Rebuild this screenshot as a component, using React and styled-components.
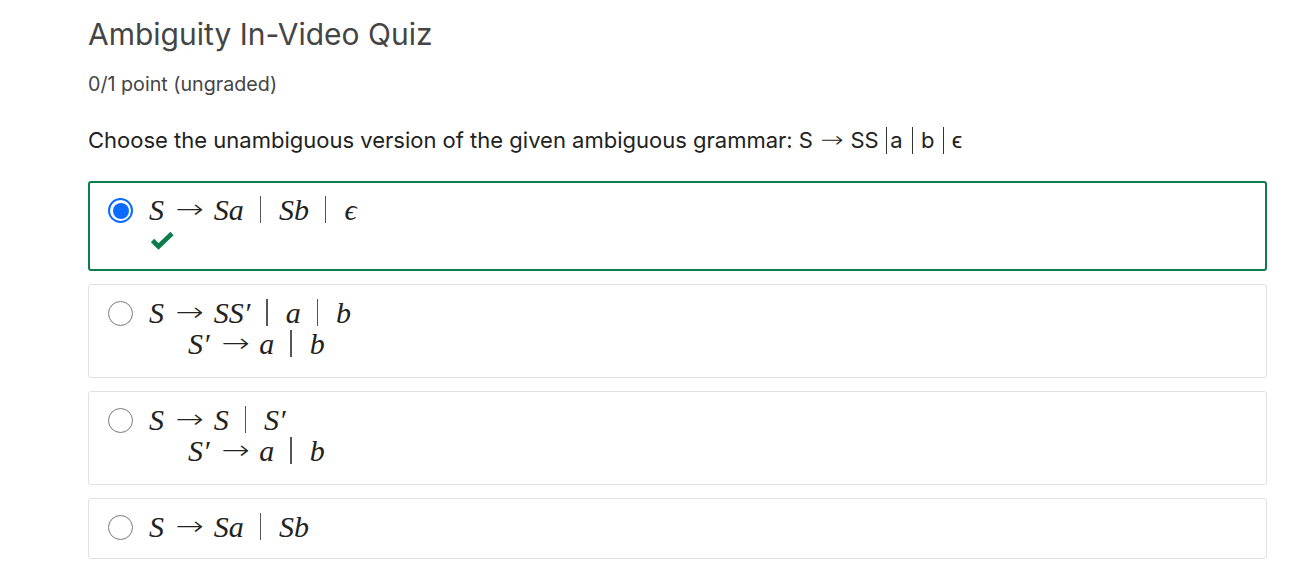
import React from "react"
import styled, { createGlobalStyle } from "styled-components"

const GlobalStyle = createGlobalStyle`
  body {
    margin: 0;
    background: #fff;
    font-family: Inter, "Noto Sans", sans-serif;
  }
`

const Page = styled.div`
  padding: 14px 39px 0 88px;
`

const Title = styled.h2`
  margin: 0;
  font-size: 30px;
  font-weight: 400;
  color: #454545;
  line-height: 40px;
`

const Points = styled.div`
  margin-top: 17px;
  font-size: 19.7px;
  line-height: 26px;
  color: #454545;
`

const Question = styled.p`
  margin: 28px 0 26px;
  font-size: 22px;
  line-height: 30px;
  color: #222;
  display: flex;
  align-items: center;
  white-space: pre;
`

const Bar = styled.span`
  display: inline-block;
  width: 1.5px;
  height: 27px;
  background: #333;
  margin: 0 ${(p) => p.$r || 6}px 0 ${(p) => p.$l || 6}px;
`

const SmallArrow = styled.span`
  font-family: "DejaVu Sans", sans-serif;
  font-weight: 200;
  display: inline-block;
  transform: scaleX(1.25);
  margin: 0 9px 0 10px;
`

const Options = styled.div`
  display: flex;
  flex-direction: column;
  gap: 13px;
`

const Option = styled.label`
  display: flex;
  align-items: flex-start;
  gap: 16px;
  border: ${(p) => (p.$correct ? "2px solid #0d7d4d" : "1px solid #e1e1e1")};
  border-radius: 3px;
  padding: ${(p) => (p.$correct ? "14px 18px 17px" : "15px 19px 17px")};
  height: ${(p) => p.$h}px;
  box-sizing: border-box;
`

const Radio = styled.span`
  flex: none;
  width: 25px;
  height: 25px;
  margin-top: 1px;
  border-radius: 50%;
  box-sizing: border-box;
  border: ${(p) => (p.$checked ? "2px solid #0a6cff" : "1.2px solid #7a7a7a")};
  display: flex;
  align-items: center;
  justify-content: center;
  &::after {
    content: "";
    display: ${(p) => (p.$checked ? "block" : "none")};
    width: 16px;
    height: 16px;
    border-radius: 50%;
    background: #0a6cff;
  }
`

const Math = styled.div`
  font-family: "Liberation Serif", "DejaVu Serif", serif;
  font-size: 30px;
  color: #222;
  line-height: 31px;
  margin-top: -3px;
  display: flex;
  flex-direction: column;
`

const Line = styled.div`
  display: flex;
  align-items: center;
  white-space: pre;
  padding-left: ${(p) => p.$indent || 0}px;
`

const V = styled.i``

const Arrow = styled.span`
  font-family: "DejaVu Sans", sans-serif;
  font-weight: 200;
  font-size: 26px;
  display: inline-block;
  transform: scaleX(1.3);
  margin: 0 13px 0 15px;
`

const Or = styled.span`
  display: inline-block;
  width: 1.3px;
  height: 27px;
  background: #555;
  margin: 0 18px 0 16px;
`

const Check = styled.svg`
  display: block;
  margin-top: 6px;
  margin-left: 1px;
`

const Answer = ({ checked, correct, h, children }) => (
  <Option $correct={correct} $h={h}>
    <Radio $checked={checked} />
    <Math>
      {children}
      {correct && (
        <Check width="24" height="19" viewBox="0 0 24 19">
          <path d="M2.5 9.5 L8.5 15.5 L22 2.5" fill="none" stroke="#0d7d4d" strokeWidth="4.6" />
        </Check>
      )}
    </Math>
  </Option>
)

const App = () => (
  <>
    <GlobalStyle />
    <Page>
      <Title>Ambiguity In-Video Quiz</Title>
      <Points>0/1 point (ungraded)</Points>
      <Question>
        Choose the unambiguous version of the given ambiguous grammar: S<SmallArrow>→</SmallArrow>SS<Bar $l={7} $r={3} />a<Bar $l={9} $r={8} />b<Bar $l={8} $r={8} />ϵ
      </Question>
      <Options>
        <Answer checked correct h={90}>
          <Line>
            <V>S</V><Arrow>→</Arrow><V>Sa</V><Or /><V>Sb</V><Or /><V>ϵ</V>
          </Line>
        </Answer>
        <Answer h={94}>
          <Line>
            <V>S</V><Arrow>→</Arrow><V>SS′</V><Or /><V>a</V><Or /><V>b</V>
          </Line>
          <Line $indent={39}>
            <V>S′</V><Arrow>→</Arrow><V>a</V><Or /><V>b</V>
          </Line>
        </Answer>
        <Answer h={94}>
          <Line>
            <V>S</V><Arrow>→</Arrow><V>S</V><Or /><V>S′</V>
          </Line>
          <Line $indent={39}>
            <V>S′</V><Arrow>→</Arrow><V>a</V><Or /><V>b</V>
          </Line>
        </Answer>
        <Answer h={61}>
          <Line>
            <V>S</V><Arrow>→</Arrow><V>Sa</V><Or /><V>Sb</V>
          </Line>
        </Answer>
      </Options>
    </Page>
  </>
)

export default App
